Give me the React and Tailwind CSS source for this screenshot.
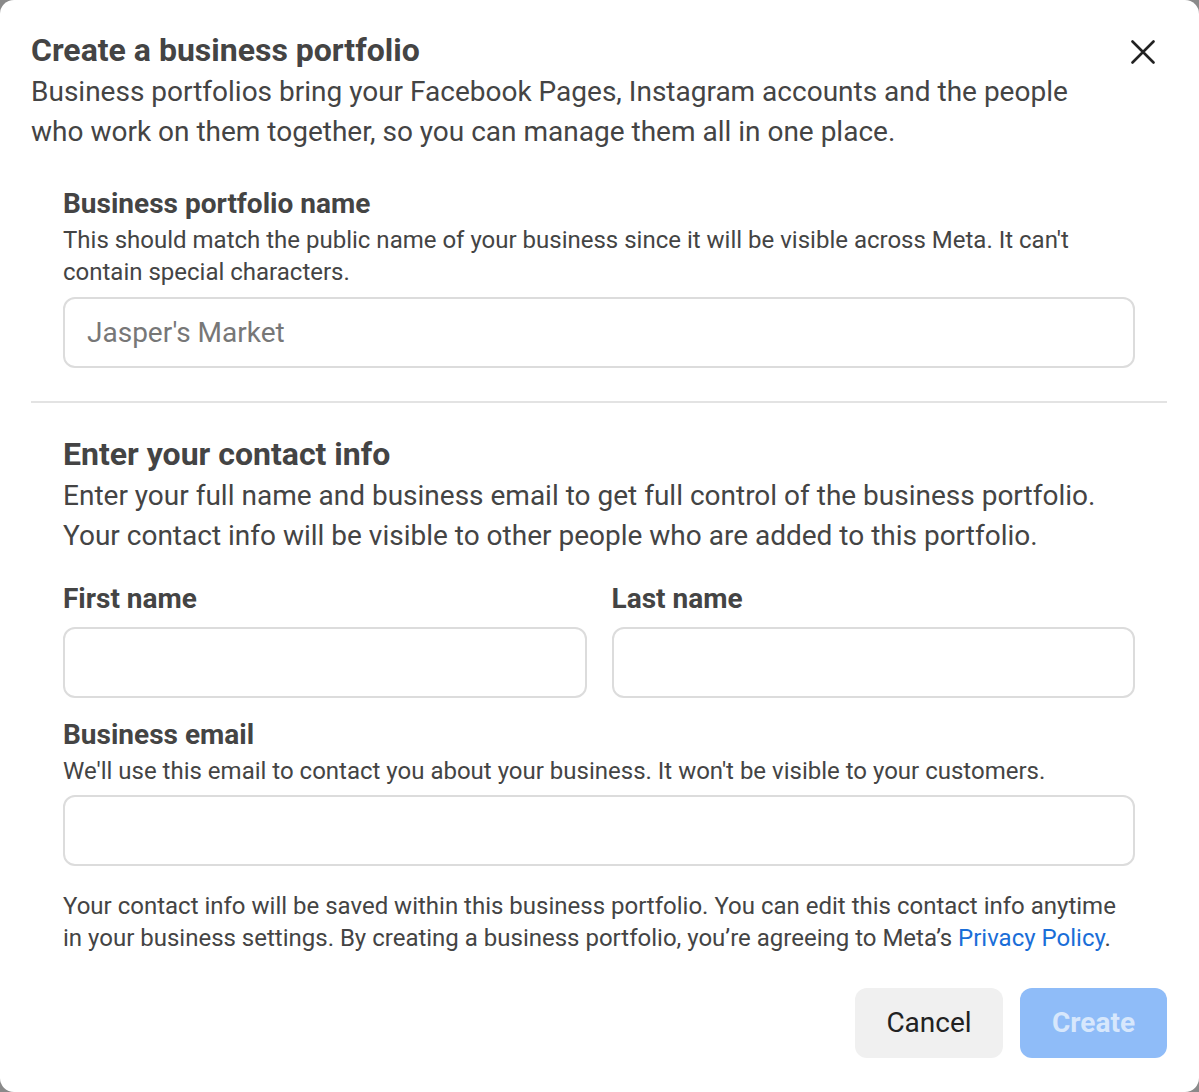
import React from 'react';

const Field = ({ placeholder }) => (
  <input
    type="text"
    placeholder={placeholder}
    className="block w-full h-[71px] rounded-[12px] border-2 border-[#dcdcdc] px-[22px] text-[28px] text-[#333] placeholder:text-[#777] outline-none"
  />
);

const App = () => {
  return (
    <div className="bg-[#8a8a8a] min-h-screen" style={{ fontFamily: 'Roboto, "Open Sans", sans-serif' }}>
      <div className="relative bg-white rounded-[14px] h-[1092px] pl-[31px] pr-[32px] pt-[30px] text-[#444]">
        <button className="absolute right-[44px] top-[40px] w-[24px] h-[24px] text-[#222]">
          <svg viewBox="0 0 24 24" className="w-[24px] h-[24px]" fill="none" stroke="currentColor" strokeWidth="2.6" strokeLinecap="round">
            <path d="M1.5 1.5 L22.5 22.5 M22.5 1.5 L1.5 22.5" />
          </svg>
        </button>

        <h1 className="text-[32px] leading-[40px] font-bold">Create a business portfolio</h1>
        <p className="mt-[2px] text-[28px] leading-[40px] pr-[80px]">
          Business portfolios bring your Facebook Pages, Instagram accounts and the people who work on them together, so you can manage them all in one place.
        </p>

        <div className="px-[32px] mt-[34px]">
          <div className="text-[28px] leading-[36px] font-bold">Business portfolio name</div>
          <p className="mt-[2px] text-[24px] leading-[32px]">
            This should match the public name of your business since it will be visible across Meta. It can't contain special characters.
          </p>
          <div className="mt-[9px]">
            <Field placeholder="Jasper's Market" />
          </div>
        </div>

        <div className="mt-[33px] h-[2px] bg-[#e3e3e3]" />

        <div className="px-[32px] mt-[31px]">
          <h2 className="text-[32px] leading-[40px] font-bold">Enter your contact info</h2>
          <p className="mt-[2px] text-[28px] leading-[40px]">
            Enter your full name and business email to get full control of the business portfolio. Your contact info will be visible to other people who are added to this portfolio.
          </p>

          <div className="mt-[25px] grid grid-cols-2 gap-[25px]">
            <div>
              <div className="text-[28px] leading-[36px] font-bold">First name</div>
              <div className="mt-[10px]">
                <Field />
              </div>
            </div>
            <div>
              <div className="text-[28px] leading-[36px] font-bold">Last name</div>
              <div className="mt-[10px]">
                <Field />
              </div>
            </div>
          </div>

          <div className="mt-[19px] text-[28px] leading-[36px] font-bold">Business email</div>
          <p className="mt-[2px] text-[24px] leading-[32px]">
            We'll use this email to contact you about your business. It won't be visible to your customers.
          </p>
          <div className="mt-[8px]">
            <Field />
          </div>

          <p className="mt-[24px] text-[24px] leading-[32px]">
            Your contact info will be saved within this business portfolio. You can edit this contact info anytime in your business settings. By creating a business portfolio, you’re agreeing to Meta’s{' '}
            <a className="text-[#1a6ed8]">Privacy Policy</a>.
          </p>
        </div>

        <div className="mt-[34px] flex justify-end gap-[17px]">
          <button className="w-[148px] h-[70px] rounded-[12px] bg-[#f0f0f0] text-[28px] text-[#222]">Cancel</button>
          <button className="w-[147px] h-[70px] rounded-[12px] bg-[#8fbcf8] text-[28px] font-bold text-[#d7e7fc]">Create</button>
        </div>
      </div>
    </div>
  );
};

export default App;
